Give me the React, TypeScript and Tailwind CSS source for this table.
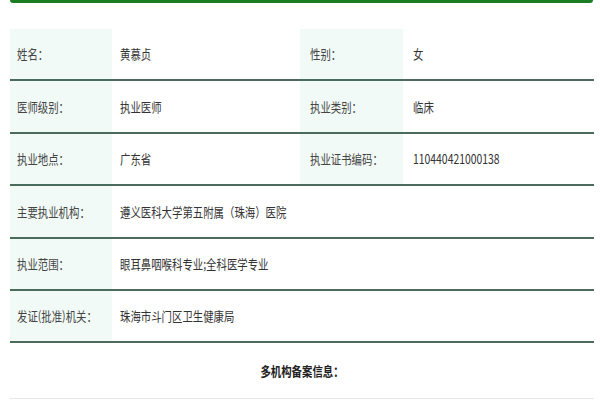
import React from 'react';

type Row = { label: string; value: string; label2?: string; value2?: string };

const rows: Row[] = [
  { label: '姓名：', value: '黄慕贞', label2: '性别：', value2: '女' },
  { label: '医师级别：', value: '执业医师', label2: '执业类别：', value2: '临床' },
  { label: '执业地点：', value: '广东省', label2: '执业证书编码：', value2: '110440421000138' },
  { label: '主要执业机构：', value: '遵义医科大学第五附属（珠海）医院' },
  { label: '执业范围：', value: '眼耳鼻咽喉科专业;全科医学专业' },
  { label: '发证(批准)机关：', value: '珠海市斗门区卫生健康局' },
];

const Txt: React.FC<{ children: React.ReactNode; className?: string }> = ({ children, className = '' }) => (
  <span className={`inline-block origin-left scale-x-[0.8] whitespace-nowrap ${className}`}>{children}</span>
);

export default function App() {
  return (
    <div
      className="w-[600px] h-[400px] overflow-hidden bg-white text-[13px] text-[#444]"
      style={{ fontFamily: '"Noto Sans CJK SC", "Noto Sans", sans-serif' }}
    >
      <div className="mx-[10px] w-[583px] h-[3px] bg-[#1b7d22] rounded-b-[3px]" />
      <div className="ml-[10px] w-[584px] pt-[26px]">
        {rows.map((r, i) => (
          <div key={i} className="flex h-[52.4px] border-b-2 border-[#4b6b5d]">
            <div className="w-[102px] bg-[#f1faf6] flex items-center pl-[7px]">
              <Txt>{r.label}</Txt>
            </div>
            {r.label2 ? (
              <>
                <div className="w-[188px] flex items-center pl-[8px]">
                  <Txt className="text-[#333]">{r.value}</Txt>
                </div>
                <div className="w-[103px] bg-[#f1faf6] flex items-center pl-[10px]">
                  <Txt>{r.label2}</Txt>
                </div>
                <div className="flex-1 flex items-center pl-[10px]">
                  <Txt className="text-[#333]">{r.value2}</Txt>
                </div>
              </>
            ) : (
              <div className="flex-1 flex items-center pl-[8px]">
                <Txt className="text-[#333]">{r.value}</Txt>
              </div>
            )}
          </div>
        ))}
        <div className="h-[56px] flex items-center justify-center border-b border-[#e6e6e6]">
          <span className="inline-block scale-x-[0.8] font-bold text-[#222] whitespace-nowrap">多机构备案信息：</span>
        </div>
      </div>
    </div>
  );
}
